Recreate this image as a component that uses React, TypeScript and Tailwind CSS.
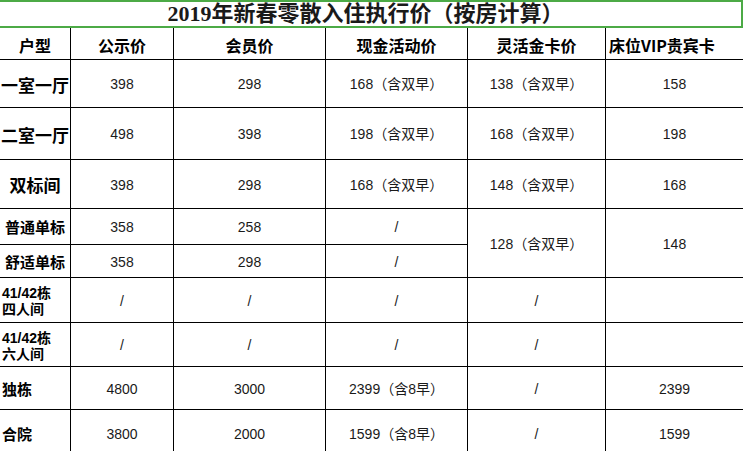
import React from 'react';

const Data: React.FC<{ children?: React.ReactNode; className?: string }> = ({ children, className = '' }) => (
  <div className={`flex items-center justify-center bg-white pt-[2px] text-[14px] text-[#1a1a1a] font-['Liberation_Sans','Noto_Sans_CJK_SC',sans-serif] ${className}`}>
    {children}
  </div>
);

const Head: React.FC<{ children: React.ReactNode; className?: string }> = ({ children, className = '' }) => (
  <div className={`flex items-center justify-center bg-white pt-[3px] text-[16px] font-bold text-black font-['Noto_Sans_CJK_SC',sans-serif] ${className}`}>
    {children}
  </div>
);

const Label: React.FC<{ children: React.ReactNode; big?: boolean; left?: boolean }> = ({ children, big, left }) => (
  <div
    className={`flex items-center bg-white pt-[2px] font-bold text-black font-['Noto_Sans_CJK_SC',sans-serif] ${
      big ? 'text-[17px]' : 'text-[15px]'
    } ${left ? 'justify-start pl-[2px]' : 'justify-center'}`}
  >
    {children}
  </div>
);

// two-line building label, e.g. 41/42栋 / 四人间
const TwoLine: React.FC<{ top: string; bottom: string }> = ({ top, bottom }) => (
  <div className="flex flex-col justify-center bg-white pt-[2px] pl-[2px] text-[14px] font-bold text-black font-['Liberation_Sans','Noto_Sans_CJK_SC',sans-serif]">
    <div className="h-[16px] leading-[16px]">{top}</div>
    <div className="h-[16px] leading-[16px]">{bottom}</div>
  </div>
);

const App: React.FC = () => {
  return (
    <div className="h-[451px] w-[743px] overflow-hidden bg-white">
      {/* Title */}
      <div className="flex h-[28px] items-center justify-center border-t-2 border-r-2 border-b-2 border-[#4caa46] pr-[10px]">
        <h1 className="text-[22px] leading-[24px] font-bold text-[#1a1a1a] font-['Liberation_Serif','Noto_Sans_CJK_SC',serif]">
          2019年新春零散入住执行价（按房计算）
        </h1>
      </div>

      {/* Table */}
      <div className="grid grid-cols-[70px_102px_151px_141px_137px_137px] grid-rows-[31px_47px_51px_48px_35px_32px_44px_43px_42px_46px] gap-px bg-black">
        <Head>户型</Head>
        <Head>公示价</Head>
        <Head>会员价</Head>
        <Head>现金活动价</Head>
        <Head>灵活金卡价</Head>
        <Head className="justify-start pl-[3px]">床位VIP贵宾卡</Head>

        <Label big>一室一厅</Label>
        <Data>398</Data>
        <Data>298</Data>
        <Data>168（含双早）</Data>
        <Data>138（含双早）</Data>
        <Data>158</Data>

        <Label big>二室一厅</Label>
        <Data>498</Data>
        <Data>398</Data>
        <Data>198（含双早）</Data>
        <Data>168（含双早）</Data>
        <Data>198</Data>

        <Label big>双标间</Label>
        <Data>398</Data>
        <Data>298</Data>
        <Data>168（含双早）</Data>
        <Data>148（含双早）</Data>
        <Data>168</Data>

        <Label>普通单标</Label>
        <Data>358</Data>
        <Data>258</Data>
        <Data>/</Data>
        <Data className="row-span-2">128（含双早）</Data>
        <Data className="row-span-2">148</Data>

        <Label>舒适单标</Label>
        <Data>358</Data>
        <Data>298</Data>
        <Data>/</Data>

        <TwoLine top="41/42栋" bottom="四人间" />
        <Data>/</Data>
        <Data>/</Data>
        <Data>/</Data>
        <Data>/</Data>
        <Data />

        <TwoLine top="41/42栋" bottom="六人间" />
        <Data>/</Data>
        <Data>/</Data>
        <Data>/</Data>
        <Data>/</Data>
        <Data />

        <Label left>独栋</Label>
        <Data>4800</Data>
        <Data>3000</Data>
        <Data>2399（含8早）</Data>
        <Data>/</Data>
        <Data>2399</Data>

        <Label left>合院</Label>
        <Data>3800</Data>
        <Data>2000</Data>
        <Data>1599（含8早）</Data>
        <Data>/</Data>
        <Data>1599</Data>
      </div>
    </div>
  );
};

export default App;
